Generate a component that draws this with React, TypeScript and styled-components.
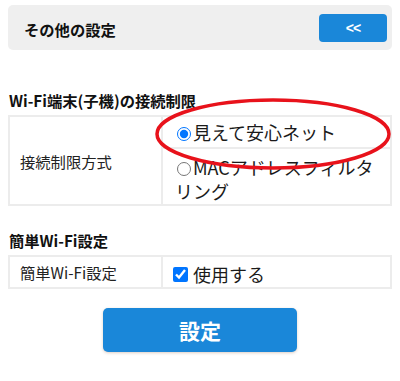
import styled, { createGlobalStyle } from "styled-components";

const GlobalStyle = createGlobalStyle`
  html, body {
    margin: 0;
    padding: 0;
    background: #ffffff;
  }
  body {
    font-family: "Noto Sans CJK JP", "Noto Sans", sans-serif;
    color: #1a1a1a;
  }
`;

export default function App() {
  return (
    <>
      <GlobalStyle />
      <Page>
        <Header>
          <HeaderTitle>その他の設定</HeaderTitle>
          <BackButton type="button">&lt;&lt;</BackButton>
        </Header>

        <SectionTitle $top={40}>Wi-Fi端末(子機)の接続制限</SectionTitle>
        <Table>
          <LabelCell>接続制限方式</LabelCell>
          <OptionsCell>
            <OptionRow $first>
              <label>
                <Radio type="radio" name="mode" defaultChecked />
                見えて安心ネット
              </label>
            </OptionRow>
            <OptionRow>
              <label>
                <Radio type="radio" name="mode" />
                MACアドレスフィルタリング
              </label>
            </OptionRow>
          </OptionsCell>
        </Table>

        <SectionTitle $top={24}>簡単Wi-Fi設定</SectionTitle>
        <Table>
          <LabelCell>簡単Wi-Fi設定</LabelCell>
          <ValueCell>
            <label>
              <Check type="checkbox" defaultChecked />
              使用する
            </label>
          </ValueCell>
        </Table>

        <Footer>
          <SubmitButton type="button">設定</SubmitButton>
        </Footer>

        <Highlight width="240" height="72" viewBox="0 0 240 72">
          <ellipse
            cx="118"
            cy="36"
            rx="116"
            ry="34"
            fill="none"
            stroke="#e8121b"
            strokeWidth="3.5"
          />
        </Highlight>
      </Page>
    </>
  );
}

const Page = styled.div`
  position: relative;
  width: 400px;
  height: 381px;
  box-sizing: border-box;
  padding: 5px 8px 0;
`;

const Header = styled.div`
  display: flex;
  align-items: center;
  justify-content: space-between;
  height: 45px;
  padding: 0 5px 0 16px;
  background: #efefef;
  border-radius: 5px;
`;

const HeaderTitle = styled.div`
  font-size: 15.3px;
  font-weight: 700;
  line-height: 20px;
  padding-top: 3px;
  color: #111;
`;

const BackButton = styled.button`
  width: 68px;
  height: 28px;
  border: none;
  border-radius: 4px;
  background: #1a87d9;
  color: #fff;
  font-family: "Liberation Sans", Arial, sans-serif;
  font-size: 14px;
  font-weight: 700;
  letter-spacing: -1px;
  cursor: pointer;
`;

const SectionTitle = styled.div<{ $top: number }>`
  margin-top: ${(p) => p.$top}px;
  margin-bottom: 5px;
  padding-left: 1px;
  font-size: 15.3px;
  font-weight: 700;
  line-height: 20px;
  color: #111;
`;

const Table = styled.div`
  display: grid;
  grid-template-columns: 153px 1fr;
  border: 2px solid #ececec;
  margin-bottom: 4px;
`;

const LabelCell = styled.div`
  display: flex;
  align-items: center;
  box-sizing: border-box;
  padding: 0 10px;
  border-right: 2px solid #ececec;
  font-size: 15.3px;
  color: #222;
`;

const OptionsCell = styled.div`
  display: flex;
  flex-direction: column;
`;

const OptionRow = styled.div<{ $first?: boolean }>`
  box-sizing: border-box;
  padding: ${(p) => (p.$first ? "3px 12px 3px" : "6px 12px 1px")};
  min-height: ${(p) => (p.$first ? "31px" : "auto")};
  border-bottom: ${(p) => (p.$first ? "2px solid #ececec" : "none")};
  font-size: 18px;
  line-height: 24px;
  color: #1a1a1a;
`;

const ValueCell = styled.div`
  display: flex;
  align-items: center;
  height: 30px;
  padding: 0 10px;
  font-size: 18px;
  color: #1a1a1a;

  label {
    display: flex;
    align-items: center;
    padding-top: 3px;
  }
`;

const Radio = styled.input`
  width: 14px;
  height: 14px;
  margin: 0 2px 0 2px;
  vertical-align: -1px;
`;

const Check = styled.input`
  width: 15px;
  height: 15px;
  margin: 2px 5px 0 0;
`;

const Footer = styled.div`
  display: flex;
  justify-content: center;
  padding-top: 15px;
`;

const SubmitButton = styled.button`
  width: 194px;
  height: 44px;
  border: none;
  border-radius: 5px;
  background: #1a87d9;
  box-shadow: 0 1px 3px rgba(120, 60, 20, 0.25);
  color: #fff;
  font-family: "Noto Sans CJK JP", sans-serif;
  font-size: 21px;
  font-weight: 700;
  cursor: pointer;
`;

const Highlight = styled.svg`
  position: absolute;
  left: 155px;
  top: 98px;
  pointer-events: none;
`;
